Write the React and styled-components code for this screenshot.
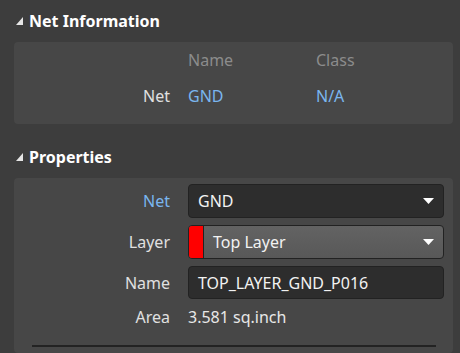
import React from "react";
import styled, { createGlobalStyle } from "styled-components";

const GlobalStyle = createGlobalStyle`
  html, body {
    margin: 0;
    padding: 0;
    background-color: #3d3d3d;
  }
  body {
    font-family: "Noto Sans", "Open Sans", sans-serif;
    color: #e8e8e8;
  }
`;

const Page = styled.div`
  display: flex;
  flex-direction: column;
  width: 460px;
  height: 353px;
  padding: 0 7px 0 14px;
  box-sizing: border-box;
  overflow: hidden;
`;

const SectionHeader = styled.div`
  display: flex;
  flex-shrink: 0;
  align-items: center;
  box-sizing: border-box;
  height: ${(p) => p.$height}px;
  padding-left: 2px;
  padding-top: ${(p) => p.$top || 0}px;
  gap: 5px;
  font-size: 16px;
  font-weight: 700;
  color: #ffffff;
`;

const Panel = styled.div`
  flex-shrink: 0;
  background-color: #474747;
  border-radius: 4px;
  padding: ${(p) => p.$padding};
  ${(p) => p.$grow && "flex: 1 1 auto;"}
`;

const InfoGrid = styled.div`
  display: grid;
  grid-template-columns: 156px 110px 1fr;
  column-gap: 18px;
  grid-template-rows: 36px 36px;
  height: 82px;
  align-content: start;
  align-items: center;
  font-size: 16px;
`;

const ColHead = styled.div`
  color: #8c8c8c;
`;

const RowLabel = styled.div`
  text-align: right;
  color: ${(p) => (p.$accent ? "#7ab6ef" : "#e0e0e0")};
`;

const Value = styled.div`
  color: ${(p) => (p.$accent ? "#7ab6ef" : "#e8e8e8")};
`;

const PropGrid = styled.div`
  display: grid;
  grid-template-columns: 156px 256px;
  grid-template-rows: 34px 34px 33px 22px;
  column-gap: 18px;
  row-gap: 7px;
  align-items: center;
  font-size: 16px;
`;

const Select = styled.div`
  display: flex;
  align-items: center;
  height: 34px;
  box-sizing: border-box;
  border: 1px solid #222222;
  border-radius: 4px;
  overflow: hidden;
  background: ${(p) =>
    p.$light ? "linear-gradient(#636363, #585858)" : "#2d2d2d"};
  color: #f2f2f2;
`;

const Swatch = styled.div`
  width: 14px;
  align-self: stretch;
  background-color: #ff0000;
  border-right: 1px solid #222222;
`;

const SelectText = styled.div`
  flex: 1;
  padding-left: ${(p) => p.$pad}px;
`;

const Caret = styled.svg`
  width: 11px;
  height: 7px;
  margin-right: 9px;
  fill: #ffffff;
`;

const Input = styled.div`
  display: flex;
  align-items: center;
  height: 33px;
  box-sizing: border-box;
  padding-left: 9px;
  border: 1px solid #222222;
  border-radius: 4px;
  background-color: #2d2d2d;
  color: #f2f2f2;
`;

const PlainValue = styled.div`
  color: #e8e8e8;
`;

const Divider = styled.div`
  height: 2px;
  margin: 17px 17px 0 18px;
  background-color: #232323;
`;

function Triangle() {
  return (
    <svg width="8" height="8" viewBox="0 0 8 8">
      <polygon points="7,0 7,8 0,8" fill="#e6e6e6" />
    </svg>
  );
}

function Arrow() {
  return (
    <Caret viewBox="0 0 11 7">
      <polygon points="0,0 11,0 5.5,6" />
    </Caret>
  );
}

export default function App() {
  return (
    <>
      <GlobalStyle />
      <Page>
        <SectionHeader $height={42}>
          <Triangle />
          <span>Net Information</span>
        </SectionHeader>
        <Panel $padding="0">
          <InfoGrid>
            <div />
            <ColHead>Name</ColHead>
            <ColHead>Class</ColHead>
            <RowLabel>Net</RowLabel>
            <Value $accent>GND</Value>
            <Value $accent>N/A</Value>
          </InfoGrid>
        </Panel>
        <SectionHeader $height={54} $top={12}>
          <Triangle />
          <span>Properties</span>
        </SectionHeader>
        <Panel $padding="6px 0 0 0" $grow>
          <PropGrid>
            <RowLabel $accent>Net</RowLabel>
            <Select>
              <SelectText $pad={9}>GND</SelectText>
              <Arrow />
            </Select>
            <RowLabel>Layer</RowLabel>
            <Select $light>
              <Swatch />
              <SelectText $pad={9}>Top Layer</SelectText>
              <Arrow />
            </Select>
            <RowLabel>Name</RowLabel>
            <Input>TOP_LAYER_GND_P016</Input>
            <RowLabel>Area</RowLabel>
            <PlainValue>3.581 sq.inch</PlainValue>
          </PropGrid>
          <Divider />
        </Panel>
      </Page>
    </>
  );
}
